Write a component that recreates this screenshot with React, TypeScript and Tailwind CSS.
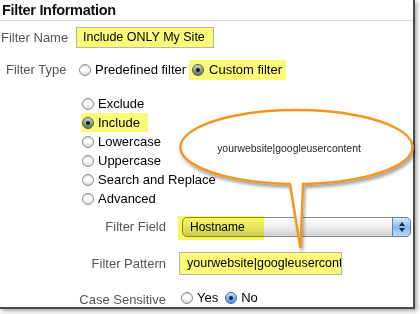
import React from 'react';

type RadioKind = 'off' | 'graphite' | 'blue';

function Radio({ kind = 'off' }: { kind?: RadioKind }) {
  if (kind === 'graphite') {
    return (
      <span className="flex h-[12px] w-[12px] shrink-0 items-center justify-center rounded-full border border-[#4f5f4f] bg-linear-to-b from-[#c9d6c6] via-[#8da28a] to-[#5f7a5c]">
        <span className="h-[4px] w-[4px] rounded-full bg-[#1a1a1a]" />
      </span>
    );
  }
  if (kind === 'blue') {
    return (
      <span className="flex h-[12px] w-[12px] shrink-0 items-center justify-center rounded-full border border-[#3f6fa6] bg-linear-to-b from-[#d3e6fb] via-[#7cb2ee] to-[#4b8fdc]">
        <span className="h-[4px] w-[4px] rounded-full bg-[#10243c]" />
      </span>
    );
  }
  return (
    <span className="h-[12px] w-[12px] shrink-0 rounded-full border border-[#8e8e8e] bg-linear-to-b from-[#f4f4f4] via-white to-[#d6d6d6] shadow-[inset_0_1px_1px_rgba(0,0,0,0.15)]" />
  );
}

const filterOptions = [
  { key: 'exclude', title: 'Exclude' },
  { key: 'include', title: 'Include', checked: true },
  { key: 'lowercase', title: 'Lowercase' },
  { key: 'uppercase', title: 'Uppercase' },
  { key: 'search', title: 'Search and Replace' },
  { key: 'advanced', title: 'Advanced' },
];

function Callout() {
  return (
    <svg
      className="pointer-events-none absolute left-0 top-0"
      width={420}
      height={314}
      viewBox="0 0 420 314"
    >
      <defs>
        <filter id="callout-shadow" x="-10%" y="-10%" width="120%" height="130%">
          <feDropShadow dx="1.5" dy="3" stdDeviation="1.6" floodColor="#000" floodOpacity="0.35" />
        </filter>
      </defs>
      <path
        d="M 290 184 A 116 37 0 1 1 303 184 L 300.5 248 Z"
        fill="#ffffff"
        stroke="#f7941d"
        strokeWidth={2.4}
        strokeLinejoin="miter"
        filter="url(#callout-shadow)"
      />
      <text
        x={289}
        y={152}
        textAnchor="middle"
        fontFamily="'Liberation Sans', Arial, sans-serif"
        fontSize={10.4}
        fill="#222"
      >
        yourwebsite|googleusercontent
      </text>
    </svg>
  );
}

export default function App() {
  return (
    <div className="h-[314px] w-[420px] bg-white font-['Liberation_Sans',Arial,sans-serif]">
      <div className="relative h-[309px] w-[415px] border-b-2 border-r-2 border-[#4a4a4a] bg-white shadow-[2px_2px_4px_rgba(0,0,0,0.35)]">
        <div className="h-[21px] border-b border-[#d9d9d9] pl-[2px] text-[14.5px] font-bold leading-[20px] tracking-[-0.3px] text-[#111]">
          Filter Information
        </div>

        <div className="mt-[6px] flex h-[21px] items-center">
          <span className="w-[76px] pl-[1px] text-[13px] text-[#555]">Filter Name</span>
          <div className="flex h-[21px] w-[138px] items-center border border-[#b5b5b5] bg-[#fbfb78] pl-[6px] text-[12.5px] text-black">
            Include ONLY My Site
          </div>
        </div>

        <div className="mt-[12px] flex h-[20px] items-center">
          <span className="w-[79px] pl-[6px] text-[13px] text-[#555]">Filter Type</span>
          <Radio />
          <span className="ml-[4px] text-[13px] text-black">Predefined filter</span>
          <div className="ml-[3px] flex h-[20px] w-[97px] items-center bg-[#fbfb78] pl-[3px]">
            <Radio kind="graphite" />
            <span className="ml-[5px] text-[13px] text-black">Custom filter</span>
          </div>
        </div>

        <div className="mt-[14px] flex flex-col pl-[81px]">
          {filterOptions.map((option) => (
            <div key={option.key} className="flex h-[19px] items-center">
              <div
                className={
                  option.checked
                    ? 'flex h-[19px] w-[67px] items-center bg-[#fbfb78] pl-[1px]'
                    : 'flex h-[19px] items-center pl-[1px]'
                }
              >
                <Radio kind={option.checked ? 'graphite' : 'off'} />
                <span className="ml-[4px] text-[13px] text-black">{option.title}</span>
              </div>
            </div>
          ))}
        </div>

        <div className="mt-[9px] flex h-[20px] items-center">
          <span className="w-[166px] text-right text-[13px] text-[#555]">Filter Field</span>
          <div className="relative ml-[16px] flex h-[20px] w-[229px] items-center rounded-[5px] border border-[#8c8c8c] bg-linear-to-b from-white via-[#ededed] to-[#d2d2d2]">
            <span className="absolute left-[-5px] top-[-2px] h-[24px] w-[86px] bg-[#f7f760] mix-blend-multiply" />
            <span className="relative pl-[7px] text-[12px] text-black">Hostname</span>
            <div className="absolute bottom-[-1px] right-[-1px] top-[-1px] flex w-[19px] flex-col items-center justify-center gap-[2px] rounded-r-[5px] border border-[#5f84b3] bg-linear-to-b from-[#d9eafc] via-[#86b8ef] to-[#bcd9f8]">
              <span className="h-0 w-0 border-x-[3px] border-b-[4px] border-x-transparent border-b-[#1b2a3d]" />
              <span className="h-0 w-0 border-x-[3px] border-t-[4px] border-x-transparent border-t-[#1b2a3d]" />
            </div>
          </div>
        </div>

        <div className="mt-[15px] flex h-[23px] items-center">
          <span className="w-[166px] text-right text-[13px] text-[#555]">Filter Pattern</span>
          <div className="ml-[13px] flex h-[23px] w-[163px] items-center overflow-hidden whitespace-nowrap border border-[#b5b5b5] bg-[#fbfb78] pl-[7px] text-[12.5px] text-black">
            yourwebsite|googleusercontent
          </div>
        </div>

        <div className="mt-[14px] flex h-[18px] items-center">
          <span className="mt-[4px] w-[166px] text-right text-[13px] text-[#555]">Case Sensitive</span>
          <span className="ml-[15px]" />
          <Radio />
          <span className="ml-[4px] text-[13px] text-black">Yes</span>
          <span className="ml-[7px]" />
          <Radio kind="blue" />
          <span className="ml-[4px] text-[13px] text-black">No</span>
        </div>

        <Callout />
      </div>
    </div>
  );
}
